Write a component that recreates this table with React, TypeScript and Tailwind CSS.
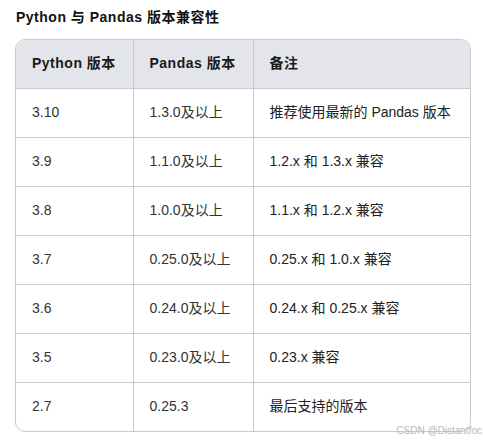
import React from 'react';

const ROWS = [
    ['3.10', '1.3.0及以上', '推荐使用最新的 Pandas 版本'],
    ['3.9', '1.1.0及以上', '1.2.x 和 1.3.x 兼容'],
    ['3.8', '1.0.0及以上', '1.1.x 和 1.2.x 兼容'],
    ['3.7', '0.25.0及以上', '0.25.x 和 1.0.x 兼容'],
    ['3.6', '0.24.0及以上', '0.24.x 和 0.25.x 兼容'],
    ['3.5', '0.23.0及以上', '0.23.x 兼容'],
    ['2.7', '0.25.3', '最后支持的版本'],
];

export default function App() {
    return (
        <div
            className="relative w-[483px] h-[441px] bg-white overflow-hidden"
            style={{ fontFamily: '"Liberation Sans", Arial, "Noto Sans CJK SC", sans-serif' }}
        >
            <div className="pl-[16px] pt-[7px] h-[39px] text-[14px] leading-[20px] font-bold tracking-[0.5px] text-[#111]">
                Python 与 Pandas 版本兼容性
            </div>

            <div className="ml-[15px] w-[456px] border border-[#c9c9cd] rounded-[10px] overflow-hidden">
                <table className="w-full border-collapse table-fixed text-[14px]">
                    <colgroup>
                        <col className="w-[117px]" />
                        <col className="w-[120px]" />
                        <col />
                    </colgroup>
                    <thead>
                        <tr className="bg-[#e4e5ea] h-[48px]">
                            <th className="text-left font-bold tracking-[0.5px] text-[#1a1a1a] pl-[16px] border-r border-b border-[#c9c9cd]">Python 版本</th>
                            <th className="text-left font-bold tracking-[0.5px] text-[#1a1a1a] pl-[16px] border-r border-b border-[#c9c9cd]">Pandas 版本</th>
                            <th className="text-left font-bold tracking-[0.5px] text-[#1a1a1a] pl-[16px] border-b border-[#c9c9cd]">备注</th>
                        </tr>
                    </thead>
                    <tbody>
                        {ROWS.map((row, idx) => (
                            <tr key={idx} className={`h-[49px] ${idx < ROWS.length - 1 ? 'border-b border-[#c9c9cd]' : ''}`}>
                                <td className="pl-[16px] text-[#333] border-r border-[#c9c9cd]">{row[0]}</td>
                                <td className="pl-[16px] text-[#333] border-r border-[#c9c9cd]">{row[1]}</td>
                                <td className="pl-[16px] text-[#222] whitespace-nowrap">{row[2]}</td>
                            </tr>
                        ))}
                    </tbody>
                </table>
            </div>

            {/* watermark */}
            <div className="absolute right-[1px] top-[424px] text-[10px] leading-[14px] text-[#b8b8b8] whitespace-nowrap">
                CSDN @Distantfoc
            </div>
        </div>
    );
}
